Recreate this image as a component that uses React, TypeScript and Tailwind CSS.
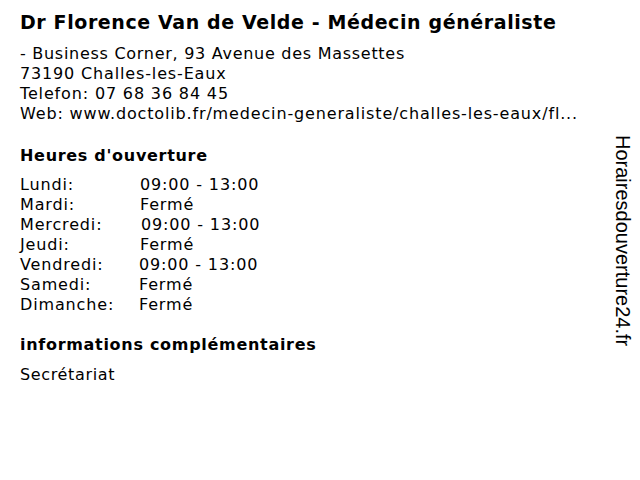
export default function App() {
  const hours: [string, string, string][] = [
    ["Lundi:", "09:00 - 13:00", "pl-0"],
    ["Mardi:", "Fermé", "pl-0"],
    ["Mercredi:", "09:00 - 13:00", "pl-[1px]"],
    ["Jeudi:", "Fermé", "pl-0"],
    ["Vendredi:", "09:00 - 13:00", "-ml-[1px]"],
    ["Samedi:", "Fermé", "-ml-[1px]"],
    ["Dimanche:", "Fermé", "-ml-[1px]"],
  ];
  return (
    <div className="relative w-[640px] h-[480px] bg-white text-black font-['DejaVu_Sans',sans-serif] overflow-hidden">
      <div className="px-5 pt-[10px]">
        <h1 className="text-[19px] font-bold leading-[24px] tracking-[0.6px]">Dr Florence Van de Velde - Médecin généraliste</h1>
        <div className="mt-[10px] text-[16px] leading-[20px] tracking-[0.85px]">
          <div className="tracking-[0.72px]">- Business Corner, 93 Avenue des Massettes</div>
          <div>73190 Challes-les-Eaux</div>
          <div>Telefon: 07 68 36 84 45</div>
          <div>Web: www.doctolib.fr/medecin-generaliste/challes-les-eaux/fl...</div>
        </div>
        <h2 className="mt-[22px] text-[16px] font-bold leading-[20px] tracking-[0.7px]">Heures d'ouverture</h2>
        <div className="mt-[9px] text-[16px] leading-[20px] tracking-[0.85px]">
          {hours.map(([d, t, p]) => (
            <div key={d} className="flex">
              <div className="w-[120px] shrink-0">{d}</div>
              <div className={p}>{t}</div>
            </div>
          ))}
        </div>
        <h2 className="mt-[20px] text-[16px] font-bold leading-[20px] tracking-[0.7px]">informations complémentaires</h2>
        <div className="mt-[10px] text-[16px] leading-[20px] tracking-[0.65px]">Secrétariat</div>
      </div>
      <div className="absolute left-[612px] top-[135px] [writing-mode:vertical-rl] font-['Liberation_Sans',sans-serif] text-[20px] leading-[22px]">
        Horairesdouverture24.fr
      </div>
    </div>
  );
}
